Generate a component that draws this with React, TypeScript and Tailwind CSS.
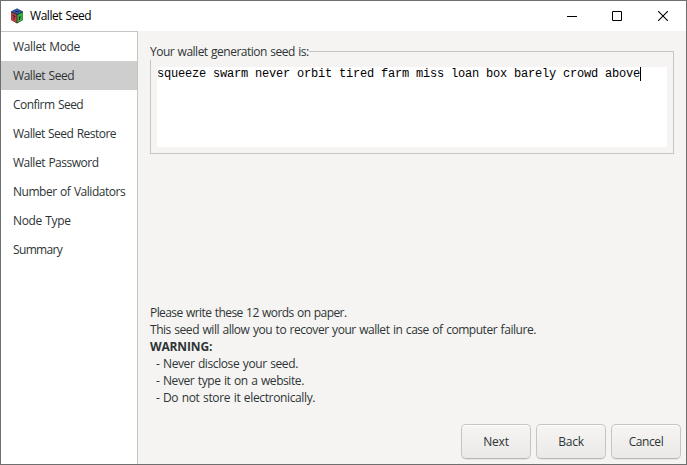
import React from 'react';

const steps = [
  { label: 'Wallet Mode', tracking: 'tracking-[-0.35px]' },
  { label: 'Wallet Seed', tracking: 'tracking-[-0.45px]' },
  { label: 'Confirm Seed', tracking: 'tracking-[-0.53px]' },
  { label: 'Wallet Seed Restore', tracking: 'tracking-[-0.53px]' },
  { label: 'Wallet Password', tracking: 'tracking-[-0.48px]' },
  { label: 'Number of Validators', tracking: 'tracking-[-0.47px]' },
  { label: 'Node Type', tracking: 'tracking-[-0.38px]' },
  { label: 'Summary', tracking: 'tracking-[-0.65px]' },
];

const warnings = [
  { text: 'Never disclose your seed.', tracking: 'tracking-[-0.4px]' },
  { text: 'Never type it on a website.', tracking: 'tracking-[-0.42px]' },
  { text: 'Do not store it electronically.', tracking: 'tracking-[-0.36px]' },
];

const buttons = [
  { label: 'Next', tracking: 'tracking-[-0.25px]' },
  { label: 'Back', tracking: 'tracking-[-0.3px]' },
  { label: 'Cancel', tracking: 'tracking-[-0.4px]' },
];

function CubeIcon() {
  return (
    <svg width="14" height="16" viewBox="0 0 14 16">
      <path d="M7 .5 13 3.5v8.5L7 15.5 1 12V3.5Z" fill="#252b2c" />
      <path d="M7 .5 12.6 3.4 7 6.3 1.4 3.4Z" fill="#2f58ac" />
      <path d="M1.2 4.3 6.6 7.1v7.6L1.2 11.7Z" fill="#cf3f45" />
      <path d="M12.8 4.3 7.4 7.1v7.6l5.4-3Z" fill="#32b63c" />
      <path d="M5.5 3.5h3M2.5 7l3 1.5M4 8v3.5M9.5 8.5v3.5M9.5 9.8 11 8.8" stroke="#252b2c" strokeWidth="1" fill="none" />
    </svg>
  );
}

export default function App() {
  return (
    <div className="flex h-[465px] w-[687px] flex-col overflow-hidden border border-[#6f6f6f] bg-[#f5f4f2] font-['Open_Sans','Noto_Sans',sans-serif] text-[12px] leading-[17px] text-[#2e3436] [word-spacing:0.8px]">
      <header className="flex h-[30px] shrink-0 items-center bg-white pl-[9px] text-black">
        <CubeIcon />
        <span className="ml-[6px] pb-px whitespace-nowrap tracking-[-0.45px]">Wallet Seed</span>
        <div className="ml-auto flex h-full">
          <div className="flex w-[45px] items-center justify-center">
            <svg width="10" height="10" shapeRendering="crispEdges"><path d="M0 5.5h10" stroke="#000" /></svg>
          </div>
          <div className="flex w-[45px] items-center justify-center">
            <svg width="10" height="10"><path d="M.5.5h9v9h-9z" fill="none" stroke="#000" /></svg>
          </div>
          <div className="flex w-[47px] items-center justify-center">
            <svg width="10" height="10"><path d="m0 0 10 10M10 0 0 10" stroke="#000" strokeWidth="1.1" /></svg>
          </div>
        </div>
      </header>
      <div className="flex min-h-0 flex-1">
        <nav className="w-[137px] shrink-0 border-t border-r border-[#c8c4bf] bg-white">
          {steps.map((s) => (
            <div key={s.label} className={`flex h-[29px] items-center whitespace-nowrap pl-3 ${s.tracking} ${s.label === 'Wallet Seed' ? 'bg-[#cecece]' : ''}`}>
              {s.label}
            </div>
          ))}
        </nav>
        <main className="flex flex-1 flex-col pl-3">
          <fieldset className="mt-[12px] h-[111px] w-[524px] border border-[#c8c4bf] px-[6px]">
            <legend className="-ml-[7px] h-[17px] whitespace-nowrap tracking-[-0.5px]">Your wallet generation seed is:</legend>
            <div className="mt-[7px] flex h-[80px] w-[510px] bg-white font-['Courier_New','Liberation_Mono',monospace] text-[12px] leading-[14px] whitespace-nowrap text-black [word-spacing:0px]">
              <span className="tracking-[-0.201px]">squeeze swarm never orbit tired farm miss loan box barely crowd above</span>
              <span className="h-[14px] w-px bg-black" />
            </div>
          </fieldset>
          <div className="mt-auto whitespace-nowrap">
            <p className="tracking-[-0.57px]">Please write these 12 words on paper.</p>
            <p className="tracking-[-0.46px]">This seed will allow you to recover your wallet in case of computer failure.</p>
            <p className="font-bold tracking-[-0.15px]">WARNING:</p>
            {warnings.map((w) => (
              <p key={w.text} className={`flex pl-[6px] ${w.tracking}`}>
                <span className="w-[7px]">-</span>
                <span>{w.text}</span>
              </p>
            ))}
          </div>
          <footer className="mt-[18px] mr-[5px] mb-[5px] flex justify-end gap-[5px]">
            {buttons.map((b) => (
              <button key={b.label} className={`h-[35px] w-[70px] rounded-[5px] border border-[#c8c4bf] border-b-[#bab6b1] bg-linear-to-b from-[#f6f5f3] to-[#eae9e7] shadow-[inset_0_1px_#ffffff,0_1px_1px_#00000010] ${b.tracking}`}>
                {b.label}
              </button>
            ))}
          </footer>
        </main>
      </div>
    </div>
  );
}
